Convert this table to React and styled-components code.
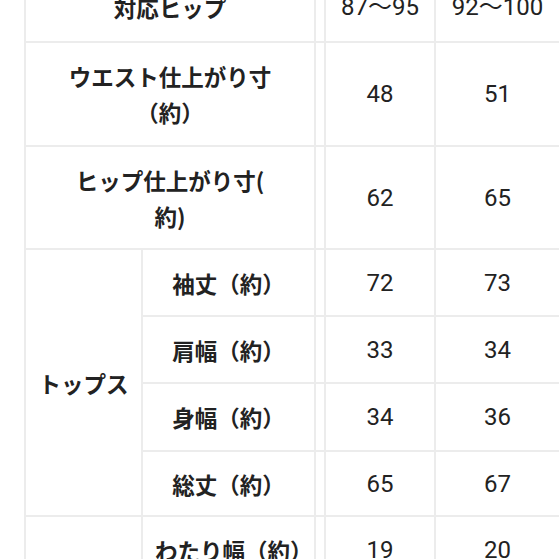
import React from 'react';
import styled, { createGlobalStyle } from 'styled-components';

const GlobalStyle = createGlobalStyle`
  html, body {
    margin: 0;
    padding: 0;
    background: #ffffff;
    overflow: hidden;
  }
  body {
    font-family: Roboto, "Noto Sans CJK JP", sans-serif;
  }
`;

const Page = styled.div`
  width: 559px;
  height: 559px;
  overflow: hidden;
  background: #fff;
  padding-left: 24px;
  box-sizing: border-box;
`;

const Table = styled.table`
  border-collapse: collapse;
  table-layout: fixed;
  width: 535px;
  margin-top: -29px;
`;

const Row = styled.tr`
  height: ${(props) => props.$h}px;
`;

const Cell = styled.td`
  border: 2px solid #ececec;
  padding: 0 12px;
  text-align: center;
  vertical-align: middle;
  line-height: 36px;
  color: #222222;
  font-family: ${(props) =>
    props.$num
      ? 'Roboto, "Noto Sans CJK JP", sans-serif'
      : '"Noto Sans CJK JP", sans-serif'};
  font-size: ${(props) => (props.$num ? '24px' : '22.5px')};
  font-weight: ${(props) => (props.$num ? 400 : 700)};
  white-space: nowrap;
`;

const Gap = styled.td`
  border: 2px solid #ececec;
  padding: 0;
`;

const tops = [
  { label: '袖丈（約）', a: '72', b: '73', h: 67 },
  { label: '肩幅（約）', a: '33', b: '34', h: 67 },
  { label: '身幅（約）', a: '34', b: '36', h: 68 },
  { label: '総丈（約）', a: '65', b: '67', h: 65 },
];

const bottoms = [
  { label: 'わたり幅（約）', a: '19', b: '20', h: 67 },
  { label: '股下（約）', a: '', b: '', h: 67 },
];

function App() {
  return (
    <>
      <GlobalStyle />
      <Page>
        <Table>
          <colgroup>
            <col style={{ width: 117 }} />
            <col style={{ width: 173 }} />
            <col style={{ width: 10 }} />
            <col style={{ width: 110 }} />
            <col style={{ width: 125 }} />
          </colgroup>
          <tbody>
            <Row $h={70}>
              <Cell colSpan={2}>対応ヒップ</Cell>
              <Gap />
              <Cell $num>87〜95</Cell>
              <Cell $num>92〜100</Cell>
            </Row>
            <Row $h={104}>
              <Cell colSpan={2}>
                ウエスト仕上がり寸
                <br />
                （約）
              </Cell>
              <Gap />
              <Cell $num>48</Cell>
              <Cell $num>51</Cell>
            </Row>
            <Row $h={103}>
              <Cell colSpan={2}>
                ヒップ仕上がり寸(
                <br />
                約)
              </Cell>
              <Gap />
              <Cell $num>62</Cell>
              <Cell $num>65</Cell>
            </Row>
            {tops.map((r, i) => (
              <Row key={r.label} $h={r.h}>
                {i === 0 && <Cell rowSpan={tops.length}>トップス</Cell>}
                <Cell>{r.label}</Cell>
                <Gap />
                <Cell $num>{r.a}</Cell>
                <Cell $num>{r.b}</Cell>
              </Row>
            ))}
            {bottoms.map((r, i) => (
              <Row key={r.label} $h={r.h}>
                {i === 0 && <Cell rowSpan={bottoms.length}>パンツ</Cell>}
                <Cell>{r.label}</Cell>
                <Gap />
                <Cell $num>{r.a}</Cell>
                <Cell $num>{r.b}</Cell>
              </Row>
            ))}
          </tbody>
        </Table>
      </Page>
    </>
  );
}

export default App;
